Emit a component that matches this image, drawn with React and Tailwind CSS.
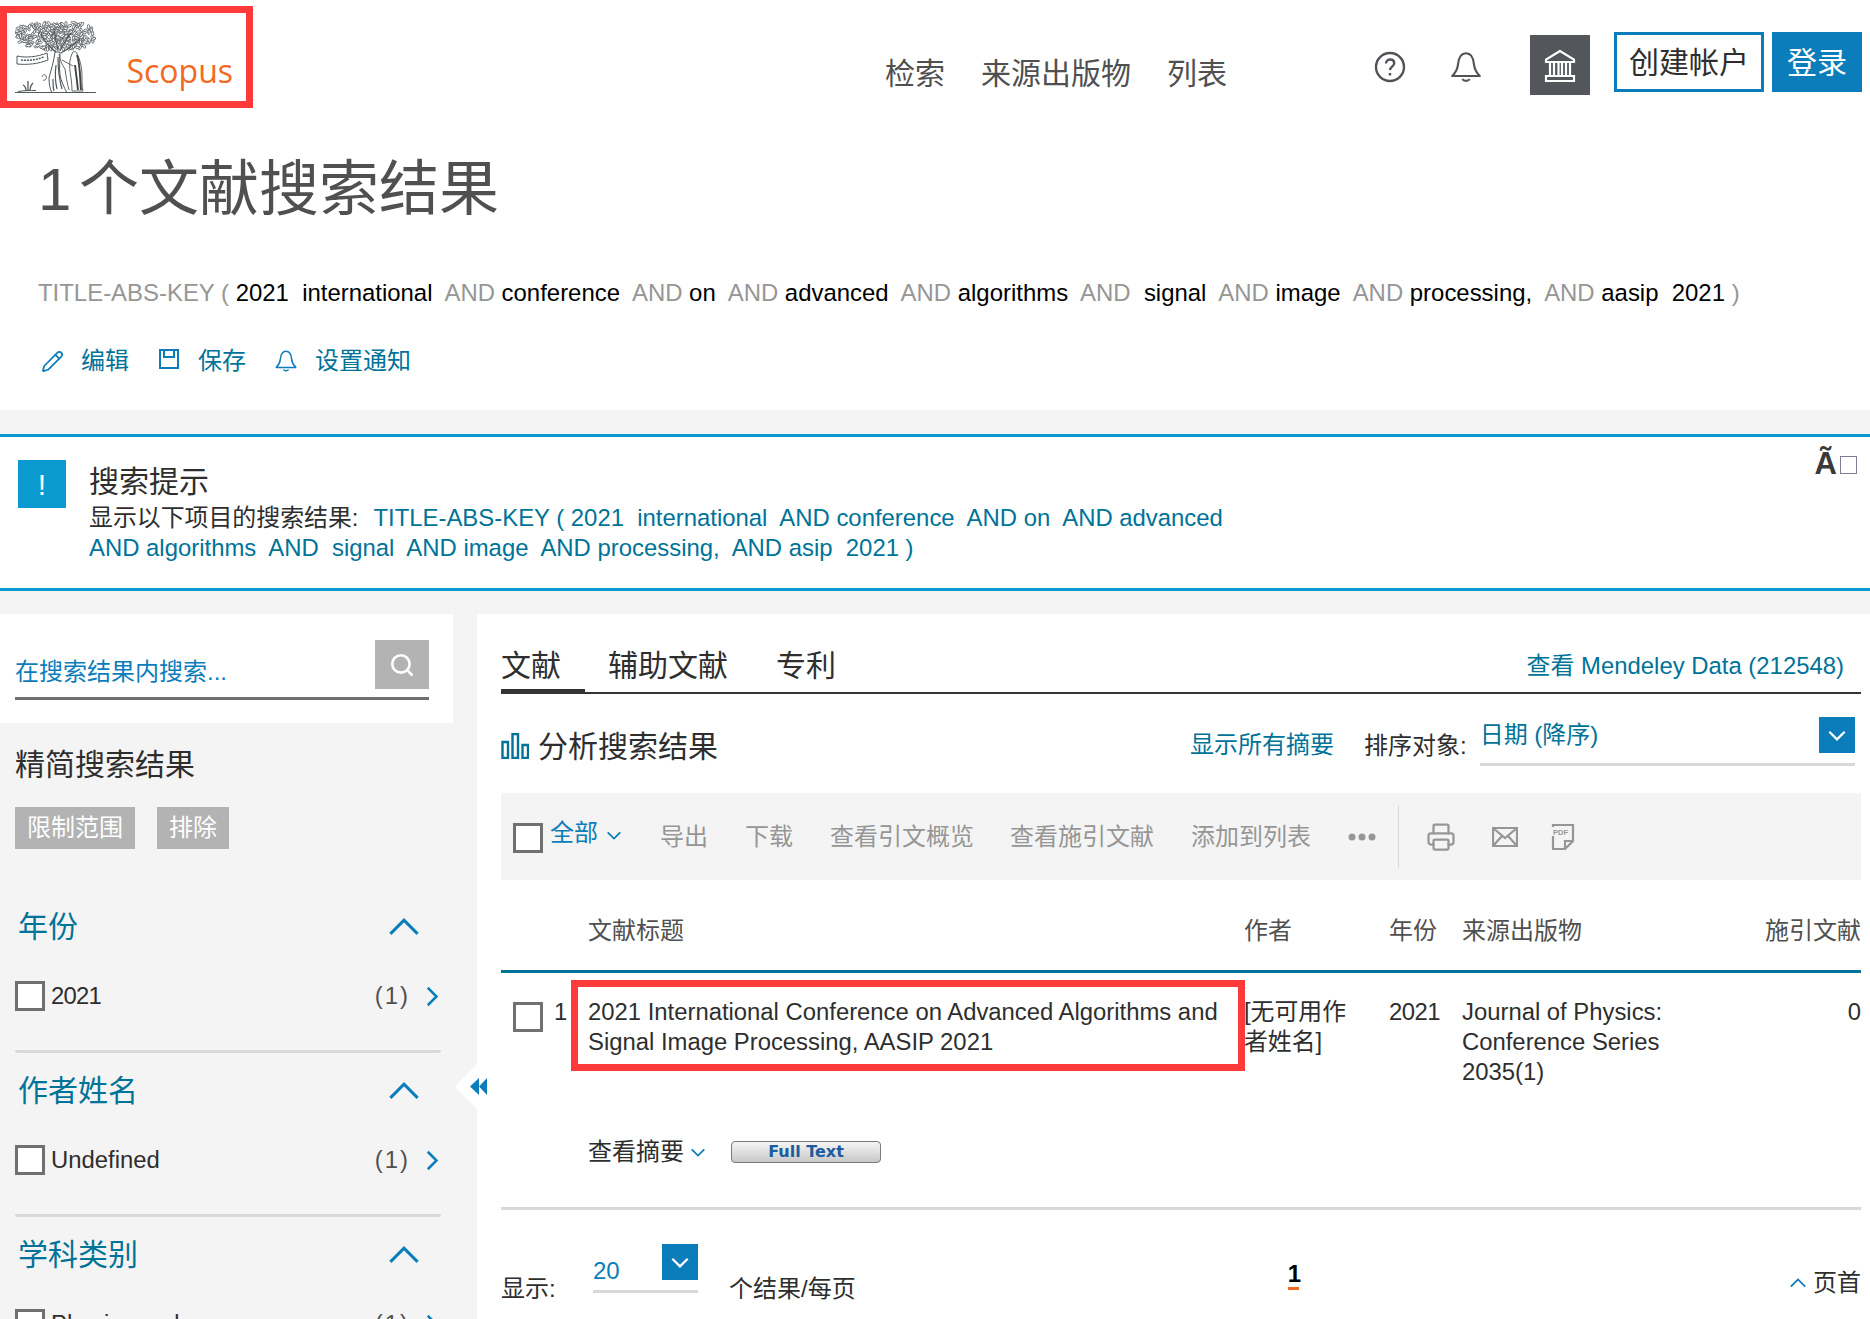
import React from "react";
import { Pencil, Search, Printer } from "lucide-react";

const blue = "#0c7dbb";

const leaves = [];
for (let i = 0; i < 320; i++) {
  const a = Math.abs(Math.sin(i * 12.9898) * 43758.5453) % 1;
  const b = Math.abs(Math.sin(i * 78.233) * 12543.123) % 1;
  const c = Math.abs(Math.sin(i * 37.719) * 9631.77) % 1;
  const x = 1 + a * 79;
  const y = 1 + b * 30;
  const dx = (x - 40.5) / 40;
  const dy = (y - 14) / 15;
  if (dx * dx + dy * dy < 1.1) leaves.push({ x, y, r: c * 180 });
}

const TreeLogo = () => (
  <svg width="81" height="72" viewBox="0 0 81 72" fill="none" stroke="#53585c" className="mb-[8px]">
    {leaves.map((l, i) => (
      <ellipse
        key={i}
        cx={l.x}
        cy={l.y}
        rx="2.300"
        ry="1.100"
        strokeWidth="0.750"
        fill="#fff"
        transform={`rotate(${l.r} ${l.x} ${l.y})`}
      />
    ))}
    <path d="M42 32c-6-4-11-10-16-18M43 30c-1-7-3-14-4-22M45 30c3-6 6-12 11-18M46 32c6-3 12-8 19-14" strokeWidth="1.200" />
    <path d="M40 31c-1 9-4 18-6 26 0 6 1 11 3 15h15c-3-6-6-12-7-18-1-8 0-16 0-23z" fill="#fff" strokeWidth="1" />
    <path d="M43 36c0 9 0 18 4 32M41 44c-1 8-1 16 1 24M38 58c0 5 0 9 1 12" strokeWidth="1.200" />
    <path d="M2 35c9 2 20 1 30-3l1 7c-10 4-21 5-31 4z" fill="#fff" strokeWidth="1" />
    <path d="M6 39c7 1 15 0 23-3" strokeWidth="1.500" strokeDasharray="2 1" />
    <path d="M58 31c2-1 4 0 4 2 3 5 5 14 5 22 0 6 0 11 1 15h-11c0-7-1-13-2-20-1-7 0-14 3-19z" fill="#fff" strokeWidth="0.900" />
    <path d="M62 34c3 8 3 22 4 35M60 44c1 8 2 16 3 25" strokeWidth="1.900" stroke="#3f4346" />
    <path d="M44 33c1 6 3 11 6 15 1 7 2 14 4 21M47 39l11 6" strokeWidth="0.900" />
    <path d="M0 71.500h81M3 70.500c5-1 12-1 18-1" strokeWidth="1" />
    <path d="M13 70V60M15 70c0-3 1-6 3-8M11 70c0-3-1-5-3-6" strokeWidth="1.300" />
    <path d="M27 56c1-3 3-3 4-1 1 3-1 5-3 4" strokeWidth="0.900" />
  </svg>
);

const Chevron = ({ dir = "down", size = 18, color = blue, width = 2, className = "" }) => {
  const d = {
    down: "M3 7l7 7 7-7",
    up: "M2 14l8-8 8 8",
    right: "M7 3l7 7-7 7",
  }[dir];
  return (
    <svg width={size} height={size} viewBox="0 0 20 20" fill="none" stroke={color} strokeWidth={width} className={`shrink-0 ${className}`}>
      <path d={d} />
    </svg>
  );
};

const BellIcon = ({ size, color, width = 2 }) => (
  <svg width={size} height={size} viewBox="0 0 32 32" fill="none" stroke={color} strokeWidth={width}>
    <path d="M3 24.500h26c-3-3-5-6-5.500-11C23 7.500 20.500 3 16 3S9 7.500 8.500 13.500C8 18.500 6 21.500 3 24.500z" strokeLinejoin="round" />
    <path d="M12.500 27.500c1.500 2 5.500 2 7 0" />
  </svg>
);

const BankIcon = () => (
  <svg width="32" height="33" viewBox="0 0 32 33" fill="none" stroke="#fff" strokeWidth="2.200">
    <path d="M16 2L2 10.500v2.500h28v-2.500zM6 14v13M10 14v13M14.500 14v13M18 14v13M22 14v13M26 14v13M2 27h28v5H2z" />
  </svg>
);

const SaveIcon = () => (
  <svg width="22" height="22" viewBox="0 0 22 22" fill="none" stroke={blue} strokeWidth="2">
    <path d="M2 2h18v18H2zM6 2v7h10V2" />
  </svg>
);

const Checkbox = ({ className = "" }) => (
  <span className={`block w-[30px] h-[30px] shrink-0 bg-white border-[3px] border-[#707070] ${className}`} />
);

const DropButton = () => (
  <span className="flex items-center justify-center w-[36px] h-[36px] bg-[#0c7dbb]">
    <Chevron dir="down" size={22} color="#fff" />
  </span>
);

const FilterSection = ({ title, item, itemClass = "", last }) => (
  <div className={last ? "mb-0" : "mb-[20px]"}>
    <div className="flex items-center justify-between h-[36px] pl-[3px] pr-[20px]">
      <span className="text-[30px] leading-[36px] text-[#007398]">{title}</span>
      <Chevron dir="up" size={34} width={1.800} />
    </div>
    <div className="flex items-start justify-between h-[30px] mt-[36px]">
      <div className="flex items-start gap-[6px]">
        <Checkbox />
        <span className={`max-w-[160px] text-[23.85px] leading-[30px] text-[#2e2e2e] ${itemClass}`}>{item}</span>
      </div>
      <div className="flex items-center h-[30px] gap-[9px] -mr-[3px]">
        <span className="text-[23.85px] text-[#505050] tracking-[2px]">(1)</span>
        <Chevron dir="right" size={25} />
      </div>
    </div>
    {!last && <div className="h-[3px] mt-[39px] bg-[#d9d9d9] rounded-b" />}
  </div>
);

const Query = () => (
  <p className="text-[23.93px] leading-[30px] whitespace-pre text-black">
    <span className="text-[#969696]">TITLE-ABS-KEY ( </span>2021  international  <span className="text-[#969696]">AND </span>conference  <span className="text-[#969696]">AND </span>on  <span className="text-[#969696]">AND </span>advanced  <span className="text-[#969696]">AND </span>algorithms  <span className="text-[#969696]">AND </span> signal  <span className="text-[#969696]">AND </span>image  <span className="text-[#969696]">AND </span>processing,  <span className="text-[#969696]">AND </span>aasip  2021 <span className="text-[#969696]">)</span>
  </p>
);

const toolbarItems = [
  { label: "导出", w: "w-[85px]" },
  { label: "下载", w: "w-[85px]" },
  { label: "查看引文概览", w: "w-[180px]" },
  { label: "查看施引文献", w: "w-[181px]" },
  { label: "添加到列表", w: "w-[157px]" },
];

export default function App() {
  return (
    <div className="relative w-[1870px] h-[1319px] overflow-hidden bg-white text-[#2e2e2e] [font-family:'Liberation_Sans','Noto_Sans_CJK_SC',sans-serif]">
      <header className="flex items-start h-[114px]">
        <div className="flex items-end justify-between w-[253px] h-[102px] mt-[6px] border-[7px] border-[#ff3a3a] pl-[8px] pr-[13px]">
          <TreeLogo />
          <span className="mb-[8px] text-[32px] leading-[44px] text-[#f26a21] [font-family:'Open_Sans',sans-serif]">Scopus</span>
        </div>
        <nav className="flex gap-[36px] ml-[632px] mt-[56px] text-[30px] leading-[36px] text-[#505050]">
          <span>检索</span>
          <span>来源出版物</span>
          <span>列表</span>
        </nav>
        <div className="ml-auto flex items-start pr-[8px] mt-[32px]">
          <svg width="32" height="32" viewBox="0 0 32 32" fill="none" stroke="#505458" strokeWidth="2.400" className="mt-[19px] mr-[43px]">
            <circle cx="16" cy="16" r="14" />
            <path d="M12 12.500c0-2.500 2-4 4.200-4 2.300 0 4 1.500 4 3.700 0 3.300-4.200 3.500-4.200 6.800" />
            <path d="M16 22v2.500" />
          </svg>
          <span className="mt-[18px] mr-[47px]"><BellIcon size={34} color="#505458" /></span>
          <span className="flex items-center justify-center w-[60px] h-[60px] mt-[3px] bg-[#53565a]">
            <BankIcon />
          </span>
          <span className="flex items-center justify-center w-[150px] h-[60px] ml-[24px] border-[3px] border-[#0c7dbb] text-[30px]">创建帐户</span>
          <span className="flex items-center justify-center w-[90px] h-[60px] ml-[8px] bg-[#0c7dbb] text-[30px] text-white">登录</span>
        </div>
      </header>

      <section className="px-[38px] pt-[46px] pb-[34px]">
        <h1 className="text-[60px] leading-[60px] text-[#505050] [word-spacing:-9px]">1 个文献搜索结果</h1>
        <div className="mt-[58px]"><Query /></div>
        <div className="flex items-center h-[30px] mt-[38px] text-[24px] text-[#007398]">
          <Pencil size={23} color={blue} strokeWidth={1.800} className="ml-[3px]" />
          <span className="ml-[17px]">编辑</span>
          <span className="ml-[29px] -mt-[4px]"><SaveIcon /></span>
          <span className="ml-[18px]">保存</span>
          <span className="ml-[28px] -mt-[1px]"><BellIcon size={24} color={blue} /></span>
          <span className="ml-[17px]">设置通知</span>
        </div>
      </section>

      <div className="h-[24px] bg-[#f4f4f4]" />

      <section className="relative flex h-[157px] border-y-[3px] border-[#0a9ad0] pl-[18px]">
        <span className="flex items-center justify-center w-[48px] h-[48px] mt-[23px] bg-[#0a9ad0] text-[30px] text-white">!</span>
        <div className="ml-[23px] pt-[27px]">
          <div className="text-[30px] leading-[36px] text-[#2e2e2e]">搜索提示</div>
          <p className="mt-[3px] w-[1150px] text-[23.9px] leading-[30px] whitespace-pre">
            显示以下项目的搜索结果:<span className="ml-[15px] text-[#007398]">{"TITLE-ABS-KEY ( 2021  international  AND conference  AND on  AND advanced"}</span>
          </p>
          <p className="text-[23.9px] leading-[30px] whitespace-pre text-[#007398]">{"AND algorithms  AND  signal  AND image  AND processing,  AND asip  2021 )"}</p>
        </div>
        <div className="absolute right-[13px] top-[9px] flex items-end gap-[3px]">
          <span className="text-[31px] leading-[36px] font-bold text-[#3a3a3a]">Ã</span>
          <span className="w-[17px] h-[18px] mb-[8px] border border-[#7d7d9a]" />
        </div>
      </section>

      <div className="h-[23px] bg-[#f4f4f4]" />

      <div className="relative flex h-[705px]">
        <aside className="w-[477px] shrink-0 bg-[#f4f4f4]">
          <div className="w-[453px] h-[109px] bg-white pl-[15px] pt-[26px]">
            <div className="flex items-start justify-between w-[414px] h-[60px] border-b-[3px] border-[#707070]">
              <span className="mt-[17px] text-[24px] leading-[30px] text-[#0c7dbb]">在搜索结果内搜索...</span>
              <span className="flex items-center justify-center w-[54px] h-[49px] bg-[#b3b3b3]">
                <Search size={26} color="#fff" strokeWidth={2.400} />
              </span>
            </div>
          </div>
          <div className="pl-[15px] w-[441px]">
            <div className="mt-[24px] text-[30px] leading-[36px]">精简搜索结果</div>
            <div className="flex gap-[22px] mt-[24px] mb-[60px] text-[24px] text-white">
              <span className="flex items-center justify-center w-[120px] h-[42px] bg-[#b3b3b3]">限制范围</span>
              <span className="flex items-center justify-center w-[72px] h-[42px] bg-[#b3b3b3]">排除</span>
            </div>
            <FilterSection title="年份" item="2021" itemClass="tracking-[-0.8px]" />
            <FilterSection title="作者姓名" item="Undefined" />
            <FilterSection title="学科类别" item="Physics and Astronomy" last />
          </div>
        </aside>

        <div className="absolute left-[455px] top-[450px] z-10 flex items-center justify-end w-[32px] h-[45px]">
          <span className="absolute left-0 top-0 w-[22px] h-[45px] bg-white [clip-path:polygon(100%_0,0_50%,100%_100%)]" />
          <svg width="17" height="17" viewBox="0 0 17 17" fill={blue} className="relative">
            <path d="M9 0v17L0 8.500zM17 0v17L9 8.500z" />
          </svg>
        </div>

        <main className="flex-1 pl-[24px] pr-[9px]">
          <div className="flex items-end h-[80px] pb-[8px] border-b-2 border-[#333] text-[30px] leading-[36px]">
            <span className="relative w-[84px]">
              文献
              <span className="absolute left-0 right-0 -bottom-[10px] h-[5px] bg-[#333]" />
            </span>
            <span className="ml-[23px]">辅助文献</span>
            <span className="ml-[48px]">专利</span>
            <span className="ml-auto pr-[17px] pb-[3px] text-[23.9px] leading-[30px] text-[#007398]">查看 Mendeley Data (212548)</span>
          </div>

          <div className="flex items-start h-[99px]">
            <svg width="28" height="26" viewBox="0 0 28 26" fill="none" stroke="#007398" strokeWidth="2.400" className="mt-[39px]">
              <path d="M1.500 9h5.500v16H1.500zM11.500 1h5.500v24h-5.500zM21.500 12h5.500v13h-5.500z" />
            </svg>
            <span className="ml-[9px] mt-[35px] text-[30px] leading-[36px]">分析搜索结果</span>
            <span className="ml-[472px] mt-[36px] text-[24px] leading-[30px] text-[#007398]">显示所有摘要</span>
            <span className="ml-[30px] mt-[37px] text-[24px] leading-[30px]">排序对象:</span>
            <div className="ml-[13px] mt-[23px] w-[375px] h-[49px] flex items-start justify-between border-b-[3px] border-[#d9d9d9]">
              <span className="mt-[3px] text-[24px] leading-[30px] text-[#007398]">日期 (降序)</span>
              <DropButton />
            </div>
          </div>

          <div className="flex items-center h-[87px] bg-[#f4f4f4] pl-[12px] text-[24px] text-[#969696]">
            <Checkbox className="mt-[3px]" />
            <span className="ml-[7px] -mt-[8px] text-[#0c7dbb]">全部</span>
            <span className="ml-[7px] -mt-[4px]"><Chevron dir="down" size={18} /></span>
            <span className="w-[37px]" />
            {toolbarItems.map((t) => (
              <span key={t.label} className={t.w}>{t.label}</span>
            ))}
            <svg width="28" height="8" viewBox="0 0 28 8" fill="#969696">
              <circle cx="4" cy="4" r="3.500" />
              <circle cx="14" cy="4" r="3.500" />
              <circle cx="24" cy="4" r="3.500" />
            </svg>
            <span className="w-px h-[63px] ml-[22px] bg-[#d9d9d9]" />
            <Printer size={30} color="#969696" strokeWidth={1.800} className="ml-[27px]" />
            <svg width="26" height="20" viewBox="0 0 26 20" fill="none" stroke="#969696" strokeWidth="2.200" className="ml-[36px]">
              <path d="M1 1h24v18H1zM1 1l12 10L25 1M1 19l9-10M25 19l-9-10" />
            </svg>
            <svg width="24" height="26" viewBox="0 0 24 26" fill="none" stroke="#969696" strokeWidth="2.200" className="ml-[33px]">
              <path d="M2 12v13h12l8-8V1H2v2M14 25v-8h8" />
              <text x="2" y="11" fontSize="7.500" fontWeight="700" fill="#969696" stroke="none">PDF</text>
            </svg>
          </div>

          <div className="grid grid-cols-[87px_656px_145px_73px_303px_1fr] items-start h-[93px] pt-[36px] border-b-[3px] border-[#007398] text-[24px] leading-[30px] text-[#505050]">
            <span />
            <span>文献标题</span>
            <span>作者</span>
            <span>年份</span>
            <span>来源出版物</span>
            <span className="text-right whitespace-nowrap justify-self-end">施引文献</span>
          </div>

          <div className="relative grid grid-cols-[87px_656px_145px_73px_303px_1fr] items-start pt-[24px] text-[23.85px] leading-[30px]">
            <div className="flex items-start">
              <Checkbox className="ml-[12px] mt-[5px]" />
              <span className="ml-[11px]">1</span>
            </div>
            <span className="w-[640px]">2021 International Conference on Advanced Algorithms and Signal Image Processing, AASIP 2021</span>
            <span className="w-[105px]">[无可用作者姓名]</span>
            <span className="tracking-[-0.5px]">2021</span>
            <span>Journal of Physics:<br />Conference Series<br />2035(1)</span>
            <span className="text-right">0</span>
            <span className="absolute left-[70px] top-[7px] w-[674px] h-[91px] border-[7px] border-[#ff3a3a]" />
          </div>

          <div className="flex items-center h-[30px] mt-[50px] pl-[87px] text-[24px]">
            <span>查看摘要</span>
            <span className="ml-[5px]"><Chevron dir="down" size={18} /></span>
            <span className="flex items-center justify-center w-[150px] h-[22px] ml-[24px] rounded-sm border border-[#7a7a7a] bg-gradient-to-b from-[#f5f5f5] to-[#c8c8c8] text-[16px] font-bold text-[#1c5c9e] [font-family:'DejaVu_Sans',sans-serif]">Full Text</span>
          </div>

          <div className="h-[3px] mt-[40px] bg-[#d9d9d9]" />

          <div className="flex items-start text-[24px] leading-[30px]">
            <span className="mt-[64px] w-[92px]">显示:</span>
            <div className="w-[105px] mt-[34px] h-[49px] flex items-start justify-between border-b-[3px] border-[#d9d9d9]">
              <span className="mt-[12px] text-[#0c7dbb]">20</span>
              <DropButton />
            </div>
            <span className="ml-[31px] mt-[64px]">个结果/每页</span>
            <div className="ml-[432px] mt-[49px] flex flex-col items-start w-[10px]">
              <span className="font-bold text-black">1</span>
              <span className="w-[11px] h-[3px] mt-[-2px] bg-[#f26a21]" />
            </div>
            <div className="ml-auto mt-[58px] flex items-center gap-[6px]">
              <Chevron dir="up" size={18} />
              <span>页首</span>
            </div>
          </div>
        </main>
      </div>
    </div>
  );
}
